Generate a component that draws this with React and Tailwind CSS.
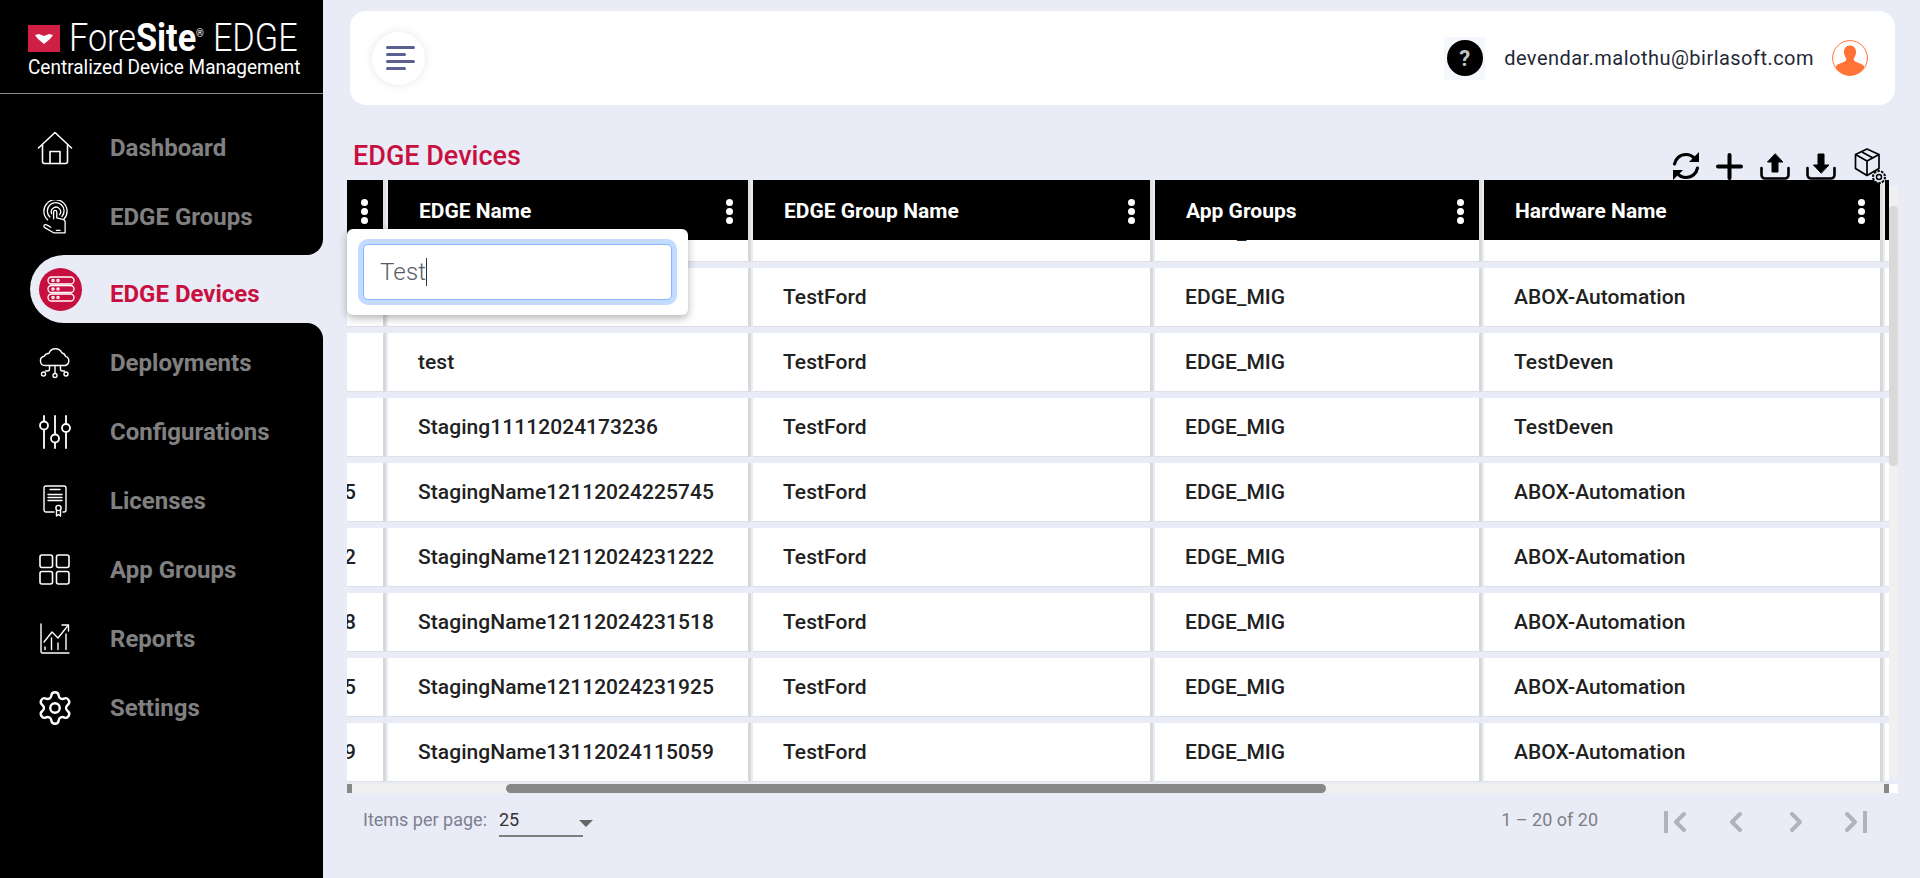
import { Settings, ChevronLeft, ChevronRight } from "lucide-react";

const navItems = [
  { label: "Dashboard", icon: HomeIcon },
  { label: "EDGE Groups", icon: TouchIcon },
  { label: "EDGE Devices", icon: ServerIcon, active: true },
  { label: "Deployments", icon: CloudIcon },
  { label: "Configurations", icon: SlidersIcon },
  { label: "Licenses", icon: LicenseIcon },
  { label: "App Groups", icon: GridIcon },
  { label: "Reports", icon: ChartIcon },
  { label: "Settings", icon: GearIcon },
];

const columns = ["EDGE Name", "EDGE Group Name", "App Groups", "Hardware Name"];

const rows = [
  ["", "", "TestFord", "EDGE_MIG", "ABOX-Automation"],
  ["", "", "TestFord", "EDGE_MIG", "ABOX-Automation"],
  ["", "test", "TestFord", "EDGE_MIG", "TestDeven"],
  ["", "Staging11112024173236", "TestFord", "EDGE_MIG", "TestDeven"],
  ["5", "StagingName12112024225745", "TestFord", "EDGE_MIG", "ABOX-Automation"],
  ["2", "StagingName12112024231222", "TestFord", "EDGE_MIG", "ABOX-Automation"],
  ["8", "StagingName12112024231518", "TestFord", "EDGE_MIG", "ABOX-Automation"],
  ["5", "StagingName12112024231925", "TestFord", "EDGE_MIG", "ABOX-Automation"],
  ["9", "StagingName13112024115059", "TestFord", "EDGE_MIG", "ABOX-Automation"],
];

function HomeIcon() {
  return (
    <svg width="36" height="34" viewBox="0 0 36 34" fill="none" stroke="white" strokeWidth="1.6" strokeLinejoin="round" strokeLinecap="round">
      <path d="M1.5 17 18 1.5 34.5 17" />
      <path d="M5.5 14v16.5a2 2 0 0 0 2 2h21a2 2 0 0 0 2-2V14" />
      <path d="M13 32.5V20.5h10v12" />
    </svg>
  );
}

function TouchIcon() {
  return (
    <svg width="26" height="34" viewBox="0 0 28 36" fill="none" stroke="white" strokeWidth="1.4" strokeLinecap="round" strokeLinejoin="round">
      <path d="M6 21a12.5 12.5 0 1 1 17.5-.5" />
      <path d="M8.5 18a9 9 0 1 1 13-.5" />
      <path d="M10.5 14.5a5 5 0 1 1 8.5 1" />
      <path d="M12.5 20V12.5a1.7 1.7 0 0 1 3.4 0V19l6.5 1.5c1.5.4 2.5 1.5 2.5 3V35H12.5L3 29.5c-1.5-1-1.2-3 .5-3.2 1-.1 2 .4 3 1l3 1.7" />
      <path d="M15.5 32.5h4" />
    </svg>
  );
}

function ServerIcon() {
  return (
    <svg width="28" height="26" viewBox="0 0 28 26" fill="none" stroke="white" strokeWidth="1.3">
      <rect x="1" y="1" width="26" height="7" rx="3.5" />
      <rect x="1" y="9.5" width="26" height="7" rx="3.5" />
      <rect x="1" y="18" width="26" height="7" rx="3.5" />
      <circle cx="6" cy="4.5" r="1.1" />
      <circle cx="11" cy="4.5" r="1.1" />
      <circle cx="6" cy="13" r="1.1" />
      <circle cx="11" cy="13" r="1.1" />
      <circle cx="6" cy="21.5" r="1.1" />
      <circle cx="11" cy="21.5" r="1.1" />
    </svg>
  );
}

function CloudIcon() {
  return (
    <svg width="32" height="32" viewBox="0 0 32 32" fill="none" stroke="white" strokeWidth="1.4" strokeLinecap="round" strokeLinejoin="round">
      <path d="M7 18.5H6a4.7 4.7 0 0 1-.8-9.3 6 6 0 0 1 4.8-3 7 7 0 0 1 13-.2 4.5 4.5 0 0 1 3.5 3.4A4.7 4.7 0 0 1 26 18.5H7Z" />
      <path d="M16 18.5v8" />
      <path d="M10.5 18.5v3.5a2 2 0 0 1-2 2H6.5" />
      <path d="M21.5 18.5v3.5a2 2 0 0 0 2 2h2" />
      <circle cx="4.5" cy="27" r="2" />
      <circle cx="16" cy="28.5" r="2" />
      <circle cx="27" cy="27" r="2" />
    </svg>
  );
}

function SlidersIcon() {
  return (
    <svg width="32" height="34" viewBox="0 0 32 34" fill="none" stroke="white" strokeWidth="1.8" strokeLinecap="round">
      <path d="M5 1v5M5 15v18M16 1v18M16 28v5M27 1v8M27 18v15" />
      <circle cx="5" cy="10.5" r="4" />
      <circle cx="16" cy="23.5" r="4" />
      <circle cx="27" cy="13" r="4" />
    </svg>
  );
}

function LicenseIcon() {
  return (
    <svg width="24" height="32" viewBox="0 0 24 32" fill="none" stroke="white" strokeWidth="1.4" strokeLinecap="round" strokeLinejoin="round">
      <path d="M11 27H3a2 2 0 0 1-2-2V3a2 2 0 0 1 2-2h18a2 2 0 0 1 2 2v22a2 2 0 0 1-2 2h-1" />
      <path d="M7 4.5h10M5 9.5h14M5 12.5h14M5 15.5h14" />
      <circle cx="15.5" cy="23" r="2.6" />
      <path d="M13.5 25.5V31l2-1.5 2 1.5v-5.5" />
    </svg>
  );
}

function GridIcon() {
  return (
    <svg width="31" height="31" viewBox="0 0 31 31" fill="none" stroke="white" strokeWidth="1.6">
      <rect x="1" y="1" width="12.5" height="12.5" rx="2" />
      <rect x="17.5" y="1" width="12.5" height="12.5" rx="2" />
      <rect x="1" y="17.5" width="12.5" height="12.5" rx="2" />
      <rect x="17.5" y="17.5" width="12.5" height="12.5" rx="2" />
    </svg>
  );
}

function ChartIcon() {
  return (
    <svg width="30" height="31" viewBox="0 0 30 31" fill="none" stroke="white" strokeWidth="1.4" strokeLinecap="round" strokeLinejoin="round">
      <path d="M1 1v27.5a1.5 1.5 0 0 0 1.5 1.5H29" />
      <path d="M4 19 12 9l6 6L28 2.5" />
      <path d="M22 2h6.5v6" />
      <path d="M5 26.5v-2.5M11.5 26.5V15M18 26.5V20M26 26.5V11" />
    </svg>
  );
}

function GearIcon() {
  return <Settings size={38} color="white" strokeWidth={1.5} />;
}

function Kebab() {
  return (
    <div className="flex flex-col gap-[2px]">
      <span className="block w-[7px] h-[7px] rounded-full bg-white" />
      <span className="block w-[7px] h-[7px] rounded-full bg-white" />
      <span className="block w-[7px] h-[7px] rounded-full bg-white" />
    </div>
  );
}

function NavItem({ item, prevActive, nextActive }) {
  const Icon = item.icon;

  if (item.active) {
    return (
      <div className="bg-black pl-[30px]">
        <div className="h-[68px] rounded-l-[34px] bg-[#e9ebf7] flex items-center pl-[9px]">
          <div className="w-[43px] h-[43px] rounded-full bg-[#c8103f] flex items-center justify-center">
            <Icon />
          </div>
          <span className="ml-[28px] pt-[9px] text-[24px] font-bold text-[#c8103f]">{item.label}</span>
        </div>
      </div>
    );
  }

  return (
    <div className="bg-[#e9ebf7]">
      <div className={`bg-black ${prevActive ? "rounded-tr-[16px] pt-[5px]" : ""} ${nextActive ? "rounded-br-[16px] pb-[4px]" : ""}`}>
        <div className="h-[69px] flex items-center">
          <div className="w-[110px] flex justify-center pr-[1px]">
            <Icon />
          </div>
          <span className="text-[24px] font-bold text-[#808080]">{item.label}</span>
        </div>
      </div>
    </div>
  );
}

function Sidebar() {
  return (
    <aside className="w-[323px] shrink-0 bg-black flex flex-col">
      <div className="h-[94px] border-b border-[#8a8a8a] pl-[28px] pt-[25px] text-white">
        <div className="flex items-center h-[27px]">
          <div className="w-[34px] h-[27px] bg-[#d01f45] flex items-center justify-center">
            <svg width="18" height="10" viewBox="0 0 18 10" fill="white">
              <path d="M0 1 4 0l5 2 5-2 4 1-3 4-6 5-6-5z" />
            </svg>
          </div>
          <div className="ml-[9px] text-[38px] leading-[27px] font-light whitespace-nowrap origin-left scale-x-[0.9]">
            Fore<span className="font-bold">Site</span>
            <sup className="text-[11px] font-normal -top-[14px]">®</sup>
            <span className="ml-[10px]">EDGE</span>
          </div>
        </div>
        <div className="mt-[3px] text-[20px] leading-[24px] whitespace-nowrap origin-left scale-x-[0.95]">Centralized Device Management</div>
      </div>
      <nav className="pt-[19px] flex-1">
        {navItems.map((item, i) => (
          <NavItem
            key={item.label}
            item={item}
            prevActive={navItems[i - 1]?.active}
            nextActive={navItems[i + 1]?.active}
          />
        ))}
      </nav>
    </aside>
  );
}

function TopBar() {
  return (
    <header className="ml-[27px] mr-[25px] mt-[11px] h-[94px] bg-white rounded-[16px] flex items-center justify-between pl-[22px] pr-[27px]">
      <button className="w-[53px] h-[53px] rounded-full bg-white shadow-[0_0_10px_rgba(0,0,0,0.1)] flex flex-col items-start justify-center gap-[4px] pl-[14px]">
        <span className="block w-[29px] h-[3px] rounded-sm bg-[#5a6191]" />
        <span className="block w-[20px] h-[3px] rounded-sm bg-[#5a6191]" />
        <span className="block w-[29px] h-[3px] rounded-sm bg-[#5a6191]" />
        <span className="block w-[20px] h-[3px] rounded-sm bg-[#5a6191]" />
      </button>
      <div className="flex items-center">
        <div className="w-[41px] h-[43px] bg-[#f4f7fb] flex items-center justify-center">
          <div className="w-[36px] h-[36px] rounded-full bg-black flex items-center justify-center text-[#c4c4c4] text-[22px] font-bold">?</div>
        </div>
        <span className="ml-[19px] text-[20px] tracking-[0.47px] text-[#1f2937]">devendar.malothu@birlasoft.com</span>
        <svg className="ml-[18px]" width="36" height="36" viewBox="0 0 36 36">
          <defs>
            <clipPath id="avatarClip">
              <circle cx="18" cy="18" r="17.4" />
            </clipPath>
          </defs>
          <circle cx="18" cy="18" r="17.4" fill="white" stroke="#ff7336" strokeWidth="1" />
          <g clipPath="url(#avatarClip)" fill="#ff7336">
            <path d="M18 5.5c4 0 6.2 3 6 7-.1 2-.8 3.8-1.8 5.2-.8 1.1-.6 3 1 3.8 3 1.5 7 2.2 8.8 4.5V36H4V26c1.8-2.3 5.8-3 8.8-4.5 1.6-.8 1.8-2.700 1-3.800-1-1.400-1.700-3.200-1.800-5.200-.2-4 2-7 6-7Z" />
          </g>
        </svg>
      </div>
    </header>
  );
}

function Toolbar() {
  return (
    <div className="flex items-end gap-[15px] pr-[34px]">
      <svg width="28" height="28" viewBox="0 0 28 28" fill="none" stroke="black" strokeWidth="3.2" strokeLinecap="round">
        <path d="M2.500 12C3.500 6.500 8 2.500 14 2.500c3.500 0 6.500 1.500 8.500 4" />
        <path d="M25.500 16c-1 5.500-5.500 9.500-11.500 9.500-3.500 0-6.500-1.500-8.500-4" />
        <path d="M27 0v10H17z" fill="black" stroke="none" />
        <path d="M1 28V18h10z" fill="black" stroke="none" />
      </svg>
      <svg className="ml-[1px]" width="27" height="27" viewBox="0 0 27 27" fill="none" stroke="black" strokeWidth="4" strokeLinecap="round">
        <path d="M13.500 2v23M2 13.500h23" />
      </svg>
      <svg className="ml-[2px]" width="30" height="27" viewBox="0 0 30 27" fill="none" stroke="black" strokeWidth="2.6" strokeLinecap="round" strokeLinejoin="round">
        <path d="M1.500 15v7a3.500 3.500 0 0 0 3.500 3.500h20a3.500 3.500 0 0 0 3.500-3.500v-7" />
        <path d="M15 1 7.500 9H12v10h6V9h4.500z" fill="black" stroke="black" strokeWidth="1" />
      </svg>
      <svg className="ml-[1px]" width="30" height="27" viewBox="0 0 30 27" fill="none" stroke="black" strokeWidth="2.6" strokeLinecap="round" strokeLinejoin="round">
        <path d="M1.500 15v7a3.500 3.500 0 0 0 3.500 3.500h20a3.500 3.500 0 0 0 3.500-3.500v-7" />
        <path d="M15 20 7.500 12H12V1h6v11h4.500z" fill="black" stroke="black" strokeWidth="1" />
      </svg>
      <svg className="ml-[3px] -mb-[6px] relative z-10" width="32" height="38" viewBox="0 0 32 38" fill="none" stroke="black" strokeWidth="1.700" strokeLinejoin="round">
        <path d="M13 1 25 6.500v14l-12 7-11.500-7v-14z" />
        <path d="M1.500 6.500 13 13l12-6.500M13 13v14" />
        <path d="M8 4l11 6" />
        <circle cx="25" cy="29" r="6" fill="#e9ebf7" strokeWidth="2" strokeDasharray="2.500 1.200" />
        <circle cx="25" cy="29" r="2.500" strokeWidth="1.500" />
      </svg>
    </div>
  );
}

const gridCols = "grid grid-cols-[39px_363px_400px_327px_399px_4px] gap-x-[2px]";

function TableHeader() {
  return (
    <div className={`${gridCols} h-[60px] text-white text-[21px] font-bold bg-[#e9ebf7]`}>
      <div className="bg-black border-r-[3px] border-[#e0e0e0] flex items-center pl-[14px] pt-[3px]">
        <Kebab />
      </div>
      {columns.map((col) => (
        <div key={col} className="bg-black border-r-[3px] border-[#e0e0e0] flex items-center justify-between pl-[31px] pr-[15px] pt-[3px]">
          <span>{col}</span>
          <Kebab />
        </div>
      ))}
      <div className="bg-black" />
    </div>
  );
}

function TableRow({ row }) {
  return (
    <div className={`${gridCols} h-[59px] text-[21px] font-medium tracking-[0.05px] text-[#212121]`}>
      <div className="bg-white border-r-[3px] border-b border-r-[#d8d8d8] border-b-[#dcdee8] flex items-center justify-end pr-[27px] pt-[2px] overflow-hidden">
        {row[0]}
      </div>
      {row.slice(1).map((cell, i) => (
        <div key={i} className="bg-white border-r-[3px] border-b border-r-[#d8d8d8] border-b-[#dcdee8] flex items-center pl-[30px] pt-[2px] whitespace-nowrap">
          {cell}
        </div>
      ))}
      <div className="bg-white border-b border-[#dcdee8]" />
    </div>
  );
}

function DataTable() {
  return (
    <div className="relative ml-[24px] w-[1551px]">
      <div className="flex items-start">
        <div className="w-[1542px] shrink-0">
          <TableHeader />
          <div className="h-[542px] overflow-hidden">
            <div className="-mt-[37px] flex flex-col gap-y-[6px]">
              {rows.map((row, i) => (
                <TableRow key={i} row={row} />
              ))}
            </div>
          </div>
        </div>
        <div className="w-[9px] h-[592px] mt-[6px] bg-[#f0f0f0] pt-[20px]">
          <div className="h-[260px] bg-[#d9d9d9] rounded-[4px]" />
        </div>
      </div>
      <div className="mt-[2px] h-[9px] flex">
        <div className="w-[1542px] bg-[#f0f0f0] flex items-stretch">
          <div className="w-[5px] bg-[#888888]" />
          <div className="ml-[154px] w-[820px] bg-[#888888] rounded-l-[5px] rounded-r-[5px]" />
          <div className="ml-auto w-[5px] bg-[#888888]" />
        </div>
        <div className="w-[9px] bg-white" />
      </div>

      <div className="absolute left-0 top-[49px] w-[341px] h-[86px] bg-white rounded-[6px] shadow-[0_3px_8px_rgba(0,0,0,0.3)] flex items-center px-[16px]">
        <div className="w-[310px] h-[56px] bg-white rounded-[5px] border border-[#86b7fe] shadow-[0_0_0_5px_#c2dbfe] flex items-center pl-[16px] text-[24px] font-light tracking-[0.2px] text-[#555c66]">
          Test
          <span className="block w-[1px] h-[28px] bg-[#333]" />
        </div>
      </div>
    </div>
  );
}

function Pagination() {
  return (
    <div className="ml-[40px] mr-[53px] mt-[13px] flex items-start text-[18px]">
      <span className="text-[#7c8090]">Items per page:</span>
      <div className="ml-[12px] w-[84px] h-[31px] border-b-2 border-[#7d7d7d] text-[#333] relative">
        25
        <span className="absolute left-[80px] top-[14px] w-0 h-0 border-x-[7px] border-x-transparent border-t-[7px] border-t-[#666]" />
      </div>
      <span className="ml-auto text-[#7f7f7f]">1 – 20 of 20</span>
      <div className="ml-[66px] flex items-center text-[#b0b3bb]">
        <div className="flex items-center">
          <span className="block w-[4px] h-[22px] bg-[#b0b3bb]" />
          <ChevronLeft size={32} strokeWidth={3} className="-ml-[4px]" />
        </div>
        <ChevronLeft size={32} strokeWidth={3} className="ml-[24px]" />
        <ChevronRight size={32} strokeWidth={3} className="ml-[28px]" />
        <div className="flex items-center ml-[23px]">
          <ChevronRight size={32} strokeWidth={3} className="-mr-[4px]" />
          <span className="block w-[4px] h-[22px] bg-[#b0b3bb]" />
        </div>
      </div>
    </div>
  );
}

export default function App() {
  return (
    <div className="flex h-[878px] w-[1920px] overflow-hidden bg-[#e9ebf7] font-['Roboto',sans-serif]">
      <Sidebar />
      <main className="flex-1 min-w-0">
        <TopBar />
        <div className="ml-[30px] mt-[25px] h-[50px] flex items-end justify-between">
          <h1 className="text-[27px] font-medium text-[#c8103f] pb-[4px]">EDGE Devices</h1>
          <Toolbar />
        </div>
        <DataTable />
        <Pagination />
      </main>
    </div>
  );
}
